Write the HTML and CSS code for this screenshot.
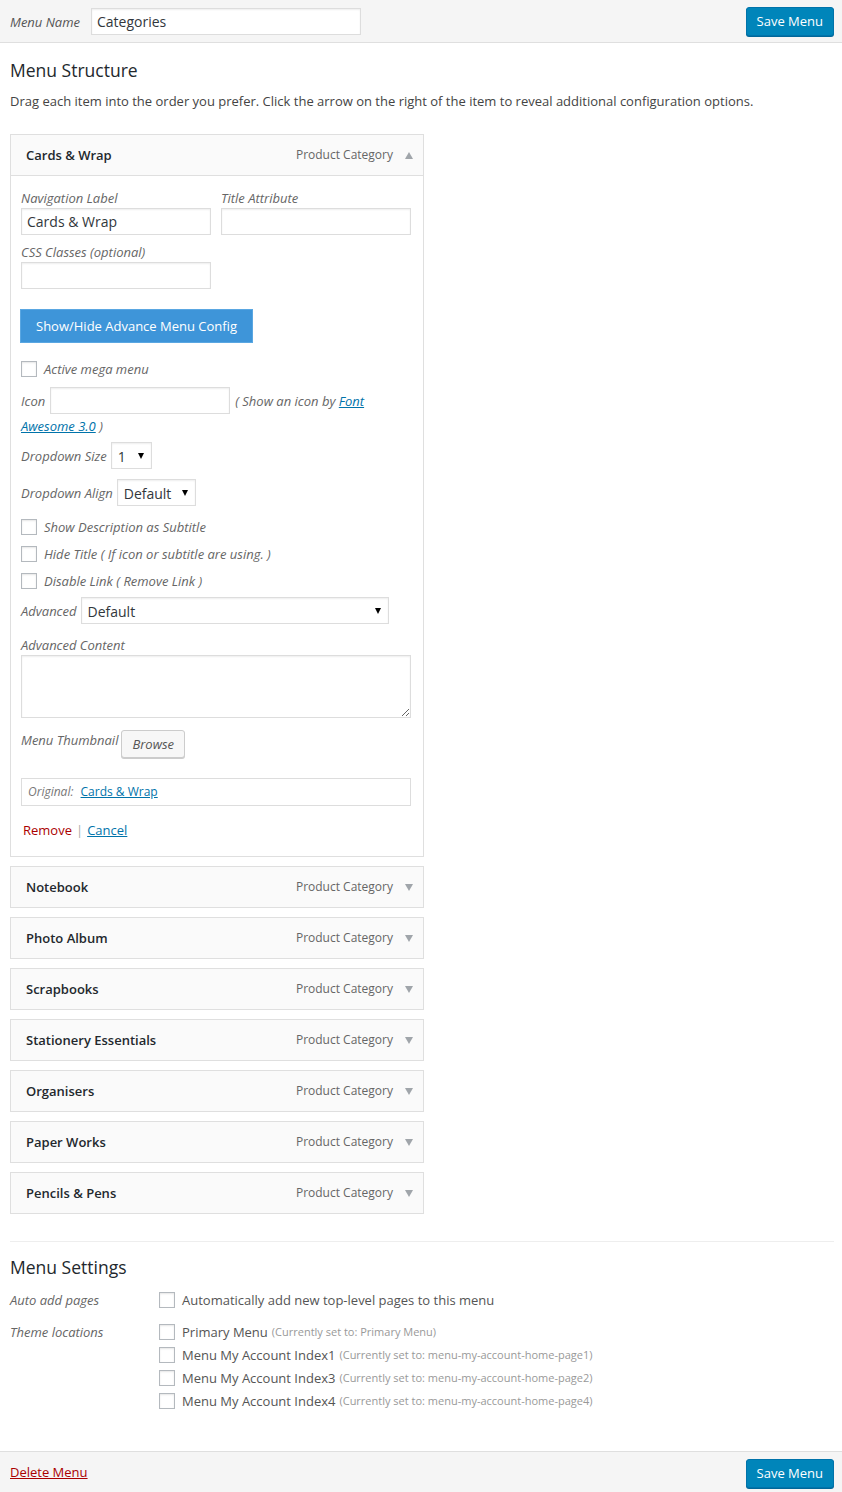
FILE: index.html
```html
<!DOCTYPE html>
<html lang="en">
<head>
    <meta charset="UTF-8">
    <meta name="viewport" content="width=device-width, initial-scale=1.0">
    <title>Edit Menu</title>
    <link rel="stylesheet" href="styles.css">
</head>
<body>

    <div class="menu-header">
        <label class="menu-name-label" for="menu-name">Menu Name</label>
        <input type="text" id="menu-name" class="text-input menu-name-input" value="Categories">
        <button class="btn-primary">Save Menu</button>
    </div>

    <div class="menu-body">
        <h3>Menu Structure</h3>
        <p class="hint">Drag each item into the order you prefer. Click the arrow on the right of the item to reveal additional configuration options.</p>

        <ul class="menu-items">
            <li class="menu-item open">
                <div class="item-bar">
                    <span class="item-title">Cards &amp; Wrap</span>
                    <span class="item-type">Product Category</span>
                    <span class="item-arrow up"></span>
                </div>
                <div class="item-settings">
                    <div class="field-pair">
                        <div class="field">
                            <label>Navigation Label</label>
                            <input type="text" class="text-input" value="Cards &amp; Wrap">
                        </div>
                        <div class="field">
                            <label>Title Attribute</label>
                            <input type="text" class="text-input">
                        </div>
                    </div>
                    <div class="field field-half gap-8">
                        <label>CSS Classes (optional)</label>
                        <input type="text" class="text-input">
                    </div>

                    <button class="btn-config">Show/Hide Advance Menu Config</button>

                    <label class="check-row gap-17"><input type="checkbox" class="check"> Active mega menu</label>

                    <div class="icon-row">
                        <label>Icon</label><input type="text" class="text-input icon-input">( Show an icon by <a href="#">Font Awesome 3.0</a> )
                    </div>

                    <div class="inline-field gap-4">
                        <label>Dropdown Size</label>
                        <span class="select-wrap size-select"><select><option>1</option></select></span>
                    </div>
                    <div class="inline-field gap-10">
                        <label>Dropdown Align</label>
                        <span class="select-wrap align-select"><select><option>Default</option></select></span>
                    </div>

                    <label class="check-row gap-12"><input type="checkbox" class="check"> Show Description as Subtitle</label>
                    <label class="check-row gap-9"><input type="checkbox" class="check"> Hide Title ( If icon or subtitle are using. )</label>
                    <label class="check-row gap-9"><input type="checkbox" class="check"> Disable Link ( Remove Link )</label>

                    <div class="inline-field gap-7">
                        <label>Advanced</label>
                        <span class="select-wrap advanced-select"><select><option>Default</option></select></span>
                    </div>

                    <div class="field gap-12">
                        <label>Advanced Content</label>
                        <textarea class="text-input content-area"></textarea>
                    </div>

                    <div class="thumb-row">
                        <label>Menu Thumbnail</label>
                        <button class="btn-browse">Browse</button>
                    </div>

                    <div class="original">
                        <span class="original-label">Original:</span>
                        <a href="#">Cards &amp; Wrap</a>
                    </div>

                    <div class="item-actions">
                        <a href="#" class="remove-link">Remove</a><span class="sep">|</span><a href="#" class="cancel-link">Cancel</a>
                    </div>
                </div>
            </li>
            <li class="menu-item"><div class="item-bar"><span class="item-title">Notebook</span><span class="item-type">Product Category</span><span class="item-arrow"></span></div></li>
            <li class="menu-item"><div class="item-bar"><span class="item-title">Photo Album</span><span class="item-type">Product Category</span><span class="item-arrow"></span></div></li>
            <li class="menu-item"><div class="item-bar"><span class="item-title">Scrapbooks</span><span class="item-type">Product Category</span><span class="item-arrow"></span></div></li>
            <li class="menu-item"><div class="item-bar"><span class="item-title">Stationery Essentials</span><span class="item-type">Product Category</span><span class="item-arrow"></span></div></li>
            <li class="menu-item"><div class="item-bar"><span class="item-title">Organisers</span><span class="item-type">Product Category</span><span class="item-arrow"></span></div></li>
            <li class="menu-item"><div class="item-bar"><span class="item-title">Paper Works</span><span class="item-type">Product Category</span><span class="item-arrow"></span></div></li>
            <li class="menu-item"><div class="item-bar"><span class="item-title">Pencils &amp; Pens</span><span class="item-type">Product Category</span><span class="item-arrow"></span></div></li>
        </ul>

        <div class="menu-settings">
            <h3>Menu Settings</h3>
            <div class="setting-row auto-add">
                <div class="setting-label">Auto add pages</div>
                <div class="setting-options">
                    <label class="option"><input type="checkbox" class="check"> Automatically add new top-level pages to this menu</label>
                </div>
            </div>
            <div class="setting-row locations">
                <div class="setting-label">Theme locations</div>
                <div class="setting-options">
                    <label class="option"><input type="checkbox" class="check"> Primary Menu <span class="current">(Currently set to: Primary Menu)</span></label>
                    <label class="option"><input type="checkbox" class="check"> Menu My Account Index1 <span class="current">(Currently set to: menu-my-account-home-page1)</span></label>
                    <label class="option"><input type="checkbox" class="check"> Menu My Account Index3 <span class="current">(Currently set to: menu-my-account-home-page2)</span></label>
                    <label class="option"><input type="checkbox" class="check"> Menu My Account Index4 <span class="current">(Currently set to: menu-my-account-home-page4)</span></label>
                </div>
            </div>
        </div>
    </div>

    <div class="menu-footer">
        <a href="#" class="delete-link">Delete Menu</a>
        <button class="btn-primary">Save Menu</button>
    </div>

</body>
</html>
```

FILE: styles.css
```css
body {
    margin: 0;
    font-family: "Open Sans", sans-serif;
    font-size: 13px;
    line-height: 18px;
    color: #444;
    background: #fff;
}
a {
    color: #0073aa;
}
ul {
    list-style: none;
    margin: 0;
    padding: 0;
}
label {
    font-style: italic;
    color: #666;
}

/* header + footer */
.menu-header {
    display: flex;
    align-items: center;
    height: 42px;
    padding: 0 8px 0 10px;
    background: #f5f5f5;
    border-bottom: 1px solid #dfdfdf;
}
.menu-name-label {
    margin: 1px 11px 0 0;
    color: #555;
}
.menu-name-input {
    width: 270px;
    font-size: 14px;
}
.btn-primary {
    margin-left: auto;
    height: 29px;
    padding: 0 10px;
    background: #0085ba;
    border: 1px solid #0073aa;
    border-radius: 3px;
    box-shadow: 0 1px 0 #006799;
    color: #fff;
    font-family: inherit;
    font-size: 13px;
}
.menu-footer {
    display: flex;
    align-items: center;
    height: 40px;
    padding: 0 8px 0 10px;
    background: #f5f5f5;
    border-top: 1px solid #dfdfdf;
}
.menu-footer .btn-primary {
    margin-top: 2px;
}
.delete-link {
    color: #a00;
}

/* inputs */
.text-input {
    box-sizing: border-box;
    height: 27px;
    padding: 3px 5px;
    border: 1px solid #ddd;
    box-shadow: inset 0 1px 2px rgba(0, 0, 0, 0.07);
    font-family: inherit;
    font-size: 14px;
    color: #32373c;
    background: #fff;
    margin: 0;
}
.check {
    appearance: none;
    box-sizing: border-box;
    width: 16px;
    height: 16px;
    margin: 0 7px 0 0;
    border: 1px solid #b4b9be;
    background: #fff;
    box-shadow: inset 0 1px 2px rgba(0, 0, 0, 0.1);
    vertical-align: middle;
    flex-shrink: 0;
}
.select-wrap {
    position: relative;
    display: inline-block;
}
.select-wrap select {
    appearance: none;
    box-sizing: border-box;
    height: 27px;
    padding: 2px 20px 0 6px;
    border: 1px solid #ddd;
    box-shadow: inset 0 1px 2px rgba(0, 0, 0, 0.07);
    background: #fff;
    font-family: inherit;
    font-size: 14px;
    color: #32373c;
    width: 100%;
}
.select-wrap::after {
    content: "";
    position: absolute;
    right: 8px;
    top: 11px;
    border-left: 3px solid transparent;
    border-right: 3px solid transparent;
    border-top: 6px solid #000;
}
.size-select { width: 41px; }
.align-select { width: 79px; }
.advanced-select { width: 308px; }

/* menu structure */
.menu-body {
    padding: 0 8px 0 10px;
}
.menu-body h3 {
    margin: 15px 0 0;
    font-size: 17.5px;
    line-height: 24px;
    font-weight: 400;
    color: #23282d;
}
.hint {
    margin: 10px 0 24px;
}
.menu-items {
    width: 414px;
}
.menu-item {
    margin-bottom: 9px;
}
.item-bar {
    display: flex;
    align-items: center;
    height: 40px;
    padding: 0 10px 0 15px;
    background: #fafafa;
    border: 1px solid #dfdfdf;
}
.item-title {
    font-weight: 600;
    color: #23282d;
}
.item-type {
    margin-left: auto;
    font-size: 12px;
    color: #666;
}
.item-arrow {
    margin-left: 12px;
    border-left: 4px solid transparent;
    border-right: 4px solid transparent;
    border-top: 7px solid #a0a5aa;
}
.item-arrow.up {
    border-top: none;
    border-bottom: 7px solid #a0a5aa;
}

.item-settings {
    display: flex;
    flex-direction: column;
    align-items: flex-start;
    padding: 13px 12px 17px 10px;
    border: 1px solid #dfdfdf;
    border-top: none;
}
.field-pair {
    display: flex;
    gap: 10px;
}
.field {
    display: flex;
    flex-direction: column;
}
.field label {
    margin-bottom: 1px;
}
.field .text-input {
    width: 190px;
}
.gap-4 { margin-top: 4px; }
.gap-7 { margin-top: 7px; }
.gap-8 { margin-top: 8px; }
.gap-9 { margin-top: 9px; }
.gap-10 { margin-top: 10px; }
.gap-12 { margin-top: 12px; }
.gap-17 { margin-top: 17px; }

.btn-config {
    margin: 20px 0 0 -1px;
    height: 34px;
    padding: 0 15px;
    background: #3e95d9;
    border: 1px solid #5aa7e2;
    color: #fff;
    font-family: inherit;
    font-size: 13px;
}
.check-row {
    display: flex;
    align-items: center;
}
.icon-row {
    margin-top: 9px;
    width: 390px;
    line-height: 24px;
    font-style: italic;
    color: #666;
}
.icon-input {
    width: 180px;
    margin: 0 5px 0 5px;
}
.inline-field {
    display: flex;
    align-items: center;
    gap: 4px;
}
.field .content-area {
    width: 390px;
    height: 63px;
    resize: vertical;
}
.thumb-row {
    display: flex;
    align-items: flex-start;
    gap: 3px;
    margin-top: 12px;
}
.thumb-row label {
    margin-top: 1px;
}
.btn-browse {
    height: 28px;
    padding: 0 10px;
    background: #f7f7f7;
    border: 1px solid #ccc;
    border-radius: 3px;
    box-shadow: 0 1px 0 #ccc;
    font-family: inherit;
    font-size: 13px;
    font-style: italic;
    color: #555;
}
.original {
    box-sizing: border-box;
    width: 390px;
    height: 28px;
    margin-top: 20px;
    padding: 4px 6px;
    border: 1px solid #ddd;
    font-size: 12px;
}
.original-label {
    font-style: italic;
    color: #777;
    margin-right: 4px;
}
.item-actions {
    margin: 15px 0 0 2px;
}
.remove-link {
    color: #a00;
    text-decoration: none;
}
.sep {
    color: #aaa;
    margin: 0 2px 0 4px;
}
.cancel-link {
    padding: 0 2px;
}

/* menu settings */
.menu-settings {
    margin-top: 27px;
    border-top: 1px solid #eee;
}
.menu-settings h3 {
    margin-top: 13px;
}
.setting-row {
    display: flex;
}
.auto-add {
    margin-top: 12px;
}
.locations {
    margin-top: 14px;
    margin-bottom: 41px;
}
.setting-label {
    width: 149px;
    font-style: italic;
    color: #666;
}
.setting-options {
    display: flex;
    flex-direction: column;
    gap: 5px;
}
.option {
    display: flex;
    align-items: center;
    font-style: normal;
    color: #555;
}
.option .check {
    margin-right: 7px;
}
.current {
    margin-left: 4px;
    font-size: 11px;
    color: #999;
}
```
